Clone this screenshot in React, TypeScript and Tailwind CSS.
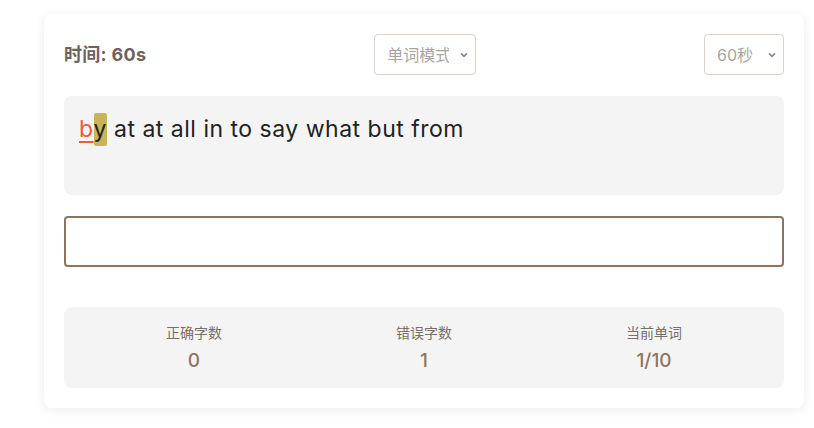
import { useState } from "react";

const words = ["by", "at", "at", "all", "in", "to", "say", "what", "but", "from"];

interface StatProps {
  label: string;
  value: string;
}

const Stat = ({ label, value }: StatProps) => (
  <div className="flex flex-col items-center">
    <span className="text-[14px] leading-[20px] text-[#7a6f68]">{label}</span>
    <span className="mt-[6px] text-[19px] leading-[24px] font-medium text-[#8c7462]">{value}</span>
  </div>
);

interface SelectBoxProps {
  value: string;
  options: string[];
  width: string;
}

const SelectBox = ({ value, options, width }: SelectBoxProps) => (
  <div className={`relative ${width}`}>
    <select
      defaultValue={value}
      className="w-full h-[41px] appearance-none rounded-[4px] border border-[#dcd2cb] bg-white pl-[12px] pr-[26px] text-[16px] text-[#a9a4a0] outline-none"
    >
      {options.map((o) => (
        <option key={o}>{o}</option>
      ))}
    </select>
    <svg
      className="pointer-events-none absolute right-[7px] top-1/2 -translate-y-1/2"
      width="10"
      height="10"
      viewBox="0 0 10 10"
      fill="none"
    >
      <path d="M2.5 3.8 L5 6.3 L7.5 3.8" stroke="#8a8a8a" strokeWidth="1.7" strokeLinecap="round" strokeLinejoin="round" />
    </svg>
  </div>
);

export default function App() {
  const [input, setInput] = useState("");

  return (
    <div
      className="min-h-[428px] w-full bg-white pt-[14px] pl-[44px]"
      style={{ fontFamily: '"Inter", "Noto Sans CJK SC", sans-serif' }}
    >
      <div className="w-[760px] rounded-[8px] bg-white p-[20px] shadow-[0_2px_12px_rgba(0,0,0,0.08)]">
        {/* header */}
        <div className="flex items-center justify-between">
          <span className="text-[18px] font-bold text-[#6e625a] tracking-[0.3px]">时间: 60s</span>
          <SelectBox value="单词模式" options={["单词模式", "句子模式"]} width="w-[102px]" />
          <SelectBox value="60秒" options={["30秒", "60秒", "120秒"]} width="w-[80px]" />
        </div>

        {/* target text */}
        <div className="mt-[21px] h-[99px] rounded-[8px] bg-[#f4f4f4] px-[15px] pt-[17px]">
          <p className="text-[23px] leading-[33px] tracking-[0.5px] text-[#222222]">
            {words.map((w, i) =>
              i === 0 ? (
                <span key={i}>
                  <span className="text-[#ec5a3f] underline decoration-[2px] underline-offset-[4px]">b</span>
                  <span className="inline-block rounded-[2px] bg-[#c9b45a] leading-[33px]">y</span>{" "}
                </span>
              ) : (
                <span key={i}>{w} </span>
              )
            )}
          </p>
        </div>

        {/* input */}
        <input
          value={input}
          onChange={(e) => setInput(e.target.value)}
          className="mt-[21px] block h-[51px] w-full rounded-[4px] border-2 border-[#8c7462] bg-white px-[12px] text-[18px] outline-none"
        />

        {/* stats */}
        <div className="mt-[40px] grid h-[81px] grid-cols-3 items-center rounded-[8px] bg-[#f4f4f4] px-[15px]">
          <Stat label="正确字数" value="0" />
          <Stat label="错误字数" value="1" />
          <Stat label="当前单词" value="1/10" />
        </div>
      </div>
    </div>
  );
}
